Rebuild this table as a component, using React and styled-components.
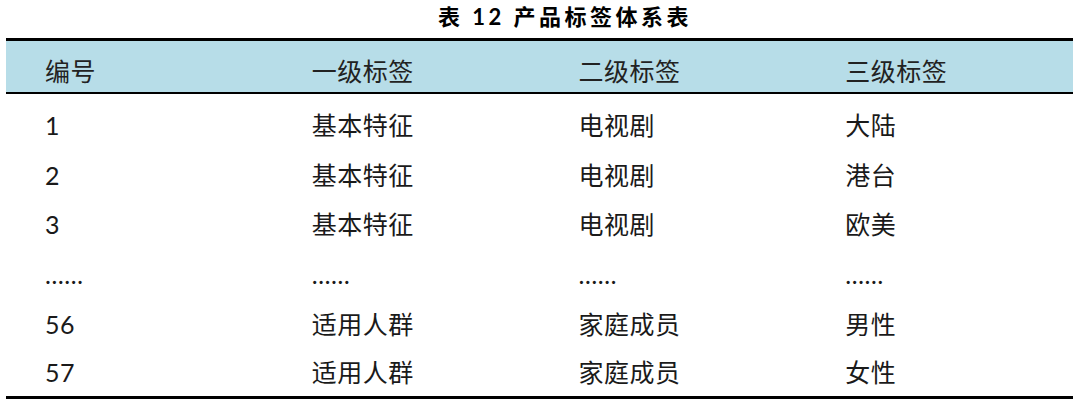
import styled, { createGlobalStyle } from 'styled-components';

const GlobalStyle = createGlobalStyle`
  html, body {
    margin: 0;
    padding: 0;
    background: #ffffff;
  }
`;

const Page = styled.div`
  width: 1077px;
  height: 405px;
  overflow: hidden;
  font-family: "Lato", "Noto Sans CJK SC", sans-serif;
  color: #1a1a1a;
`;

const Caption = styled.h3`
  margin: 0;
  padding: 4px 0 0 53px;
  height: 34px;
  box-sizing: border-box;
  text-align: center;
  font-size: 22px;
  line-height: 26px;
  font-weight: 700;
  letter-spacing: 3.5px;
  color: #000;
`;

const Table = styled.div`
  margin-left: 6px;
  width: 1067px;
  border-top: 3px solid #000;
  border-bottom: 3px solid #000;
  margin-top: 4px;
`;

const Row = styled.div`
  display: grid;
  grid-template-columns: repeat(4, 1fr);
  height: ${({ $h }) => $h}px;
  align-items: center;
  background: ${({ $head }) => ($head ? '#b7dde8' : 'transparent')};
  border-bottom: ${({ $head }) => ($head ? '2px solid #000' : 'none')};
  padding-top: ${({ $pt }) => $pt || 0}px;
  box-sizing: content-box;
`;

const Cell = styled.div`
  padding-left: 39px;
  font-size: 25px;
  line-height: 30px;
  letter-spacing: 0.5px;
  font-weight: 400;
  color: ${({ $head }) => ($head ? '#222' : '#1a1a1a')};
  white-space: nowrap;
`;

const Body = styled.div`
  padding-top: 6px;
`;

const head = ['编号', '一级标签', '二级标签', '三级标签'];

const rows = [
  ['1', '基本特征', '电视剧', '大陆'],
  ['2', '基本特征', '电视剧', '港台'],
  ['3', '基本特征', '电视剧', '欧美'],
  ['……', '……', '……', '……'],
  ['56', '适用人群', '家庭成员', '男性'],
  ['57', '适用人群', '家庭成员', '女性'],
];

export default function App() {
  return (
    <Page>
      <GlobalStyle />
      <Caption>表 12 产品标签体系表</Caption>
      <Table>
        <Row $head $h={42} $pt={9}>
          {head.map((h) => (
            <Cell key={h} $head>{h}</Cell>
          ))}
        </Row>
        <Body>
          {rows.map((r, i) => (
            <Row key={i} $h={i === rows.length - 1 ? 47 : 49.8}>
              {r.map((c, j) => (
                <Cell key={j}>{c}</Cell>
              ))}
            </Row>
          ))}
        </Body>
      </Table>
    </Page>
  );
}
